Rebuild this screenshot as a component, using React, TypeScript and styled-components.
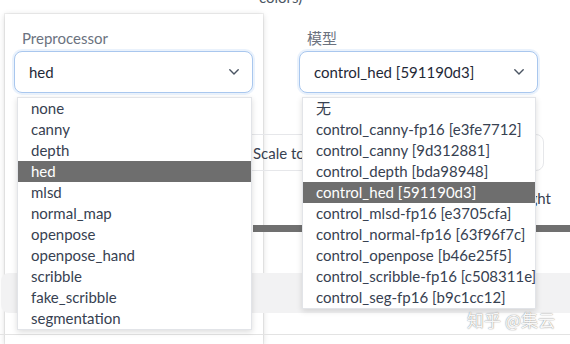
import React from "react";
import styled, { createGlobalStyle } from "styled-components";

const Global = createGlobalStyle`
  html, body { margin: 0; padding: 0; background: #ffffff; }
  body { font-family: Lato, "Noto Sans CJK SC", sans-serif; }
`;

const FONT = `Lato, "Noto Sans CJK SC", sans-serif`;

const Page = styled.div`
  position: relative;
  width: 570px;
  height: 344px;
  overflow: hidden;
  background: #ffffff;
  display: grid;
  grid-template-columns: 5px 258px 1fr;
  grid-template-rows: 14px 84px 1fr;
  font-family: ${FONT};
  color: #374151;
`;

const TopCaption = styled.div`
  grid-column: 2 / 4;
  grid-row: 1;
  padding-left: 254px;
  margin-top: -11px;
  font-size: 15px;
  line-height: 16px;
  color: #4b5563;
  white-space: nowrap;
`;

const Panel = styled.div`
  grid-column: 2;
  grid-row: 2 / 4;
  background: #ffffff;
  box-shadow: 0 0 0 1px rgba(0, 0, 0, 0.05), 0 1px 6px rgba(0, 0, 0, 0.16);
  padding: 14px 10px 0 9px;
`;

const ModelColumn = styled.div`
  grid-column: 3;
  grid-row: 2;
  padding: 14px 0 0 36px;
`;

const Field = styled.div<{ $width?: number }>`
  display: flex;
  flex-direction: column;
  width: ${(p) => (p.$width ? `${p.$width}px` : "auto")};
`;

const Label = styled.div`
  font-size: 15px;
  line-height: 20px;
  height: 20px;
  padding-left: 8px;
  margin-bottom: 3px;
  color: #6b7280;
`;

const SelectBox = styled.div`
  position: relative;
  height: 42px;
  box-sizing: border-box;
  border: 1px solid #a9c7ee;
  border-radius: 8px;
  box-shadow: 0 0 0 2px rgba(160, 196, 240, 0.22);
  background: #ffffff;
  display: flex;
  align-items: center;
  justify-content: space-between;
  padding: 0 13px 0 14px;
  font-size: 15px;
  color: #1f2937;
`;

const Chevron = () => (
  <svg width="10" height="6" viewBox="0 0 10 6" fill="none">
    <path d="M0.8 0.8 L5 5 L9.2 0.8" stroke="#4b5563" strokeWidth="1.4" strokeLinecap="round" strokeLinejoin="round" />
  </svg>
);

const Menu = styled.ul<{ $right: number }>`
  position: absolute;
  z-index: 10;
  top: calc(100% + 5px);
  left: 2px;
  right: ${(p) => p.$right}px;
  margin: 0;
  padding: 0;
  list-style: none;
  background: #ffffff;
  border: 1px solid #e2e4e8;
  box-shadow: 0 2px 6px rgba(0, 0, 0, 0.14);
`;

const Item = styled.li<{ $active?: boolean }>`
  height: 21px;
  line-height: 21px;
  padding-left: 13px;
  font-size: 15px;
  white-space: nowrap;
  color: ${(p) => (p.$active ? "#ffffff" : "#374151")};
  background: ${(p) => (p.$active ? "#6e6e6e" : "transparent")};
`;

const Lower = styled.div`
  grid-column: 1 / -1;
  grid-row: 3;
  position: relative;
  z-index: 1;
  display: flex;
  flex-direction: column;
`;

const RadioBox = styled.div`
  margin: 36px 0 0 240px;
  width: 304px;
  height: 37px;
  box-sizing: border-box;
  border: 1px solid #e6e7ea;
  border-radius: 8px;
  display: flex;
  align-items: center;
  padding-left: 12px;
  font-size: 15px;
  color: #374151;
  white-space: nowrap;
  overflow: hidden;
`;

const HeightRow = styled.div`
  margin-top: 17px;
  height: 20px;
  line-height: 20px;
  text-align: right;
  padding-right: 19px;
  font-size: 15px;
  color: #374151;
`;

const Track = styled.div`
  margin: 17px 0 0 253px;
  height: 7px;
  background: #707070;
`;

const Band = styled.div`
  margin: 41px 0 0 1px;
  height: 40px;
  background: #f2f2f3;
  border-radius: 8px 0 0 8px;
`;

const Divider = styled.div`
  margin-top: 21px;
  border-top: 1px solid #e3e3e3;
`;

const Watermark = styled.div`
  position: absolute;
  z-index: 20;
  right: 15px;
  bottom: 15px;
  font-family: "Noto Sans CJK SC", sans-serif;
  font-size: 17px;
  line-height: 18px;
  color: rgba(255, 255, 255, 0.95);
  text-shadow: 0 0 1px rgba(0, 0, 0, 0.45), 0 0 2px rgba(0, 0, 0, 0.2);
`;

const preprocessors = [
  "none",
  "canny",
  "depth",
  "hed",
  "mlsd",
  "normal_map",
  "openpose",
  "openpose_hand",
  "scribble",
  "fake_scribble",
  "segmentation",
];

const models = [
  "无",
  "control_canny-fp16 [e3fe7712]",
  "control_canny [9d312881]",
  "control_depth [bda98948]",
  "control_hed [591190d3]",
  "control_mlsd-fp16 [e3705cfa]",
  "control_normal-fp16 [63f96f7c]",
  "control_openpose [b46e25f5]",
  "control_scribble-fp16 [c508311e]",
  "control_seg-fp16 [b9c1cc12]",
];

export default function App() {
  return (
    <>
      <Global />
      <Page>
        <TopCaption>colors)</TopCaption>
        <Panel>
          <Field>
            <Label>Preprocessor</Label>
            <SelectBox>
              <span>hed</span>
              <Chevron />
              <Menu $right={0}>
                {preprocessors.map((p) => (
                  <Item key={p} $active={p === "hed"}>
                    {p}
                  </Item>
                ))}
              </Menu>
            </SelectBox>
          </Field>
        </Panel>
        <ModelColumn>
          <Field $width={239}>
            <Label>模型</Label>
            <SelectBox>
              <span>control_hed [591190d3]</span>
              <Chevron />
              <Menu $right={1}>
                {models.map((m) => (
                  <Item key={m} $active={m === "control_hed [591190d3]"}>
                    {m}
                  </Item>
                ))}
              </Menu>
            </SelectBox>
          </Field>
        </ModelColumn>
        <Lower>
          <RadioBox>Scale to Fit (Inner Fit)</RadioBox>
          <HeightRow>Canvas Height</HeightRow>
          <Track />
          <Band />
          <Divider />
        </Lower>
        <Watermark>知乎 @集云</Watermark>
      </Page>
    </>
  );
}
